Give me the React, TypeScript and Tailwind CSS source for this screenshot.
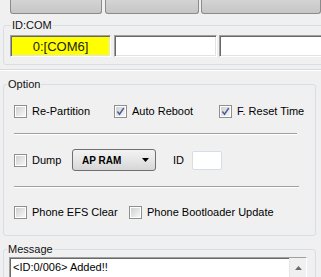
import React from "react"

function Check({ checked = false }: { checked?: boolean }) {
  return (
    <span className="inline-flex h-[13px] w-[13px] shrink-0 border border-[#8e8f8f] bg-white p-[1px]">
      <span className="flex h-full w-full items-center justify-center bg-gradient-to-br from-[#cfd0d2] to-[#f7f7f7]">
        {checked && (
          <svg width="9" height="9" viewBox="0 0 9 9">
            <path d="M1.4 4.5 L3.5 7.2 L7.8 1" fill="none" stroke="#4a5c98" strokeWidth="1.4" />
          </svg>
        )}
      </span>
    </span>
  )
}

function CheckItem({ label, checked, width }: { label: string; checked?: boolean; width: string }) {
  return (
    <div className={`flex items-center ${width}`}>
      <Check checked={checked} />
      <span className="ml-[5px] whitespace-nowrap">{label}</span>
    </div>
  )
}

const sunken =
  "border border-t-[#a0a0a0] border-l-[#a0a0a0] border-b-white border-r-white shadow-[inset_1px_1px_0_#696969,inset_-1px_-1px_0_#e3e3e3]"

function Separator({ width }: { width: string }) {
  return <div className={`${width} h-[2px] border-t border-[#a0a0a0] border-b border-b-white`} />
}

export default function App() {
  return (
    <div className="h-[277px] w-[321px] overflow-hidden bg-[#f0f0f0] font-['Liberation_Sans',Arial,sans-serif] text-[11px] leading-[13px] text-black">
      {/* port buttons, clipped at top */}
      <div className="flex h-[14px] pl-[10px]">
        <div className="w-[101px] rounded-b-[3px] border-x border-b border-[#8b8b8b] bg-gradient-to-b from-[#d4d4d4] to-[#c6c6c6]" />
        <div className="ml-[3px] w-[103px] rounded-b-[3px] border-x border-b border-[#8b8b8b] bg-gradient-to-b from-[#d4d4d4] to-[#c6c6c6]" />
        <div className="ml-[2px] w-[120px] shrink-0 rounded-b-[3px] border-x border-b border-[#8b8b8b] bg-gradient-to-b from-[#d4d4d4] to-[#c6c6c6]" />
      </div>

      <fieldset className="ml-[3px] mt-[4px] w-[340px] rounded-[3px] border border-[#d5dfe5] pb-[7px]">
        <legend className="ml-[7px] px-[1px] leading-[14px] text-[#111]">ID:COM</legend>
        <div className="mt-[3px] flex pl-[6px]">
          <div className={`flex h-[22px] w-[101px] items-center justify-center bg-[#ffff00] text-[13px] text-[#222] ${sunken}`}>
            0:[COM6]
          </div>
          <div className={`ml-[3px] h-[22px] w-[103px] bg-white ${sunken}`} />
          <div className={`ml-[2px] h-[22px] w-[120px] shrink-0 bg-white ${sunken}`} />
        </div>
      </fieldset>

      <div className="mt-[4px] h-[2px] w-full border-t border-[#dadada] border-b border-b-white" />

      <fieldset className="ml-[3px] mt-[6px] w-[313px] rounded-[3px] border border-[#d5dfe5] pb-[16px] pl-[10px]">
        <legend className="-ml-[7px] px-[1px] leading-[14px] text-[#111]">Option</legend>
        <div className="mt-[14px] flex h-[13px] items-center">
          <CheckItem label="Re-Partition" width="w-[100px]" />
          <CheckItem label="Auto Reboot" checked width="w-[105px]" />
          <CheckItem label="F. Reset Time" checked width="w-[90px]" />
        </div>
        <div className="mt-[15px]">
          <Separator width="w-[283px]" />
        </div>
        <div className="mt-[14px] flex h-[22px] items-center">
          <CheckItem label="Dump" width="w-[58px]" />
          <div className="flex h-[22px] w-[84px] items-center justify-between rounded-[3px] border border-[#707070] bg-gradient-to-b from-[#f3f3f3] via-[#e6e6e6] to-[#d6d6d6] pl-[9px] pr-[6px] text-[10px] font-bold">
            <span>AP RAM</span>
            <svg width="7" height="4" viewBox="0 0 7 4">
              <path d="M0 0 H7 L3.5 4 Z" fill="#000" />
            </svg>
          </div>
          <span className="ml-[17px]">ID</span>
          <div className="ml-[8px] h-[19px] w-[30px] rounded-[2px] border border-[#d5dde6] bg-white" />
        </div>
        <div className="mt-[15px]">
          <Separator width="w-[285px]" />
        </div>
        <div className="mt-[18px] flex h-[13px] items-center">
          <CheckItem label="Phone EFS Clear" width="w-[115px]" />
          <CheckItem label="Phone Bootloader Update" width="w-[160px]" />
        </div>
      </fieldset>

      <fieldset className="ml-[3px] mt-[6px] w-[313px] rounded-[3px] border border-[#d5dfe5] pl-[5px]">
        <legend className="-ml-[2px] px-[1px] leading-[14px] text-[#111]">Message</legend>
        <div className={`mt-[1px] flex h-[40px] w-[298px] bg-white ${sunken}`}>
          <div className="flex-1 pl-[3px] pt-[3px]">&lt;ID:0/006&gt; Added!!</div>
          <div className="flex w-[17px] justify-center border-l border-[#e6e6e6] bg-[#f0f0f0] pt-[8px]">
            <svg width="7" height="4" viewBox="0 0 7 4">
              <path d="M0 4 H7 L3.5 0 Z" fill="#6a6a6a" />
            </svg>
          </div>
        </div>
      </fieldset>
    </div>
  )
}
